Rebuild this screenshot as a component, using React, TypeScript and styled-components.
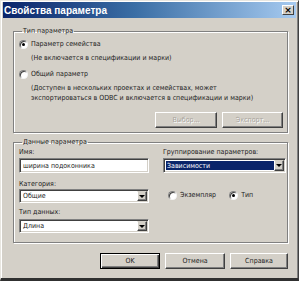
import React from "react";
import styled, { createGlobalStyle } from "styled-components";

const GlobalStyle = createGlobalStyle`
  html, body {
    margin: 0;
    padding: 0;
    background: #ffffff;
  }
  body {
    font-family: "DejaVu Sans Condensed", "Liberation Sans", Arial, sans-serif;
    font-size: 7px;
    color: #1c1c1c;
  }
`;

const Window = styled.div`
  width: 299px;
  height: 281px;
  box-sizing: border-box;
  background: #d4d0c8;
  border-style: solid;
  border-width: 1px 1px 3px 1px;
  border-color: #e8e6e0 #404040 #303030 #e8e6e0;
  box-shadow: inset 1px 1px 0 #ffffff, inset -1px 0 0 #808080;
  padding: 1px 2px 0 2px;
  display: flex;
  flex-direction: column;
`;

const TitleBar = styled.div`
  height: 16px;
  background: linear-gradient(to right, #0a246a 0%, #3a6ea5 45%, #a6caf0 100%);
  display: flex;
  align-items: center;
  justify-content: space-between;
  padding: 0 2px 0 1px;
`;

const TitleText = styled.span`
  color: #fff;
  font-family: "Liberation Sans", Arial, sans-serif;
  font-weight: bold;
  font-size: 10px;
`;

const CloseButton = styled.div`
  width: 12px;
  height: 10px;
  box-sizing: border-box;
  background: #d4d0c8;
  border: 1px solid;
  border-color: #fff #404040 #404040 #fff;
  display: flex;
  align-items: center;
  justify-content: center;
  font-size: 9px;
  font-weight: bold;
  line-height: 8px;
  color: #000;
  font-family: "DejaVu Sans", sans-serif;
`;

const Body = styled.div`
  padding: 8px 8px 0 10px;
  display: flex;
  flex-direction: column;
`;

const Group = styled.fieldset<{ $top?: number; $bottom: number }>`
  margin: ${(p) => p.$top ?? 0}px 0 0 0;
  padding: 0 4px ${(p) => p.$bottom}px 5px;
  border: 1px solid #808080;
  box-shadow: 1px 1px 0 #fff, inset 1px 1px 0 #fff;
  min-inline-size: 0;
`;

const Legend = styled.legend`
  padding: 0 1px;
  margin-left: 3px;
  line-height: 10px;
  font-size: 7px;
`;

const RadioRow = styled.label<{ $top: number }>`
  display: flex;
  align-items: center;
  gap: 3px;
  height: 10px;
  margin-top: ${(p) => p.$top}px;
  line-height: 10px;
`;

const Radio = styled.span<{ $checked?: boolean }>`
  position: relative;
  width: 9px;
  height: 9px;
  box-sizing: border-box;
  border-radius: 50%;
  background: #fff;
  border: 1px solid;
  border-color: #808080 #f4f4f4 #f4f4f4 #808080;
  box-shadow: inset 1px 1px 0 #404040;
  flex: none;

  &::after {
    content: "";
    display: ${(p) => (p.$checked ? "block" : "none")};
    position: absolute;
    left: 2px;
    top: 2px;
    width: 3px;
    height: 3px;
    border-radius: 50%;
    background: #000;
  }
`;

const Note = styled.div<{ $top: number }>`
  margin: ${(p) => p.$top}px 0 0 12px;
  line-height: 10px;
`;

const ButtonRow = styled.div<{ $top: number }>`
  display: flex;
  justify-content: flex-end;
  gap: 5px;
  margin-top: ${(p) => p.$top}px;
`;

const Button = styled.div<{ $w: number; $disabled?: boolean; $default?: boolean }>`
  width: ${(p) => p.$w}px;
  height: 16px;
  box-sizing: border-box;
  background: #d4d0c8;
  border: 1px solid;
  border-color: ${(p) => (p.$default ? "#000" : "#fff #404040 #404040 #fff")};
  box-shadow: ${(p) =>
    p.$default
      ? "inset 1px 1px 0 #fff, inset -1px -1px 0 #404040, inset -2px -2px 0 #808080"
      : "inset -1px -1px 0 #808080"};
  display: flex;
  align-items: center;
  justify-content: center;
  color: ${(p) => (p.$disabled ? "#a8a49c" : "#1c1c1c")};
  text-shadow: ${(p) => (p.$disabled ? "1px 1px 0 #fff" : "none")};
`;

const Columns = styled.div`
  display: grid;
  grid-template-columns: 130px 123px;
  column-gap: 14px;
`;

const Column = styled.div`
  display: flex;
  flex-direction: column;
`;

const FieldLabel = styled.div<{ $top: number }>`
  margin-top: ${(p) => p.$top}px;
  line-height: 10px;
  height: 10px;
`;

const Field = styled.div<{ $top: number; $h: number }>`
  margin-top: ${(p) => p.$top}px;
  height: ${(p) => p.$h}px;
  box-sizing: border-box;
  background: #fff;
  border: 1px solid;
  border-color: #808080 #fff #fff #808080;
  box-shadow: inset 1px 1px 0 #404040, inset -1px -1px 0 #d4d0c8;
  display: flex;
  align-items: stretch;
  padding: 2px 1px 2px 2px;
`;

const FieldText = styled.div<{ $selected?: boolean }>`
  flex: 1;
  display: flex;
  align-items: center;
  padding-left: 1px;
  background: ${(p) => (p.$selected ? "#0a246a" : "transparent")};
  color: ${(p) => (p.$selected ? "#fff" : "#1c1c1c")};
  white-space: nowrap;
  overflow: hidden;
`;

const DropButton = styled.div`
  width: 10px;
  margin: -1px 0 -1px 0;
  box-sizing: border-box;
  background: #d4d0c8;
  border: 1px solid;
  border-color: #d4d0c8 #404040 #404040 #fff;
  box-shadow: inset -1px -1px 0 #808080;
  display: flex;
  align-items: center;
  justify-content: center;
`;

const Arrow = styled.span`
  width: 0;
  height: 0;
  border-left: 3px solid transparent;
  border-right: 3px solid transparent;
  border-top: 3px solid #000;
`;

const ScopeRow = styled.div`
  display: flex;
  gap: 13px;
  margin: 17px 0 0 5px;
`;

const Footer = styled.div`
  display: flex;
  justify-content: flex-end;
  gap: 5px;
  margin-top: 10px;
`;

const Select: React.FC<{ value: string; top: number; h: number; selected?: boolean }> = ({
  value,
  top,
  h,
  selected,
}) => (
  <Field $top={top} $h={h}>
    <FieldText $selected={selected}>{value}</FieldText>
    <DropButton>
      <Arrow />
    </DropButton>
  </Field>
);

export default function App() {
  return (
    <>
      <GlobalStyle />
      <Window>
        <TitleBar>
          <TitleText>Свойства параметра</TitleText>
          <CloseButton>×</CloseButton>
        </TitleBar>
        <Body>
          <Group $bottom={4}>
            <Legend>Тип параметра</Legend>
            <RadioRow $top={3}>
              <Radio $checked />
              Параметр семейства
            </RadioRow>
            <Note $top={4}>(Не включается в спецификации и марки)</Note>
            <RadioRow $top={6}>
              <Radio />
              Общий параметр
            </RadioRow>
            <Note $top={4}>
              (Доступен в нескольких проектах и семействах, может
              <br />
              экспортироваться в ODBC и включается в спецификации и марки)
            </Note>
            <ButtonRow $top={9}>
              <Button $w={62} $disabled>
                Выбор...
              </Button>
              <Button $w={61} $disabled>
                Экспорт...
              </Button>
            </ButtonRow>
          </Group>
          <Group $top={4} $bottom={9}>
            <Legend>Данные параметра</Legend>
            <Columns>
              <Column>
                <FieldLabel $top={0}>Имя:</FieldLabel>
                <Field $top={1} $h={15}>
                  <FieldText>ширина подоконника</FieldText>
                </Field>
                <FieldLabel $top={6}>Категория:</FieldLabel>
                <Select value="Общие" top={0} h={14} />
                <FieldLabel $top={4}>Тип данных:</FieldLabel>
                <Select value="Длина" top={2} h={14} />
              </Column>
              <Column>
                <FieldLabel $top={0}>Группирование параметров:</FieldLabel>
                <Select value="Зависимости" top={1} h={15} selected />
                <ScopeRow>
                  <RadioRow $top={0}>
                    <Radio />
                    Экземпляр
                  </RadioRow>
                  <RadioRow $top={0}>
                    <Radio $checked />
                    Тип
                  </RadioRow>
                </ScopeRow>
              </Column>
            </Columns>
          </Group>
          <Footer>
            <Button $w={60} $default>
              OK
            </Button>
            <Button $w={60}>Отмена</Button>
            <Button $w={58}>Справка</Button>
          </Footer>
        </Body>
      </Window>
    </>
  );
}
